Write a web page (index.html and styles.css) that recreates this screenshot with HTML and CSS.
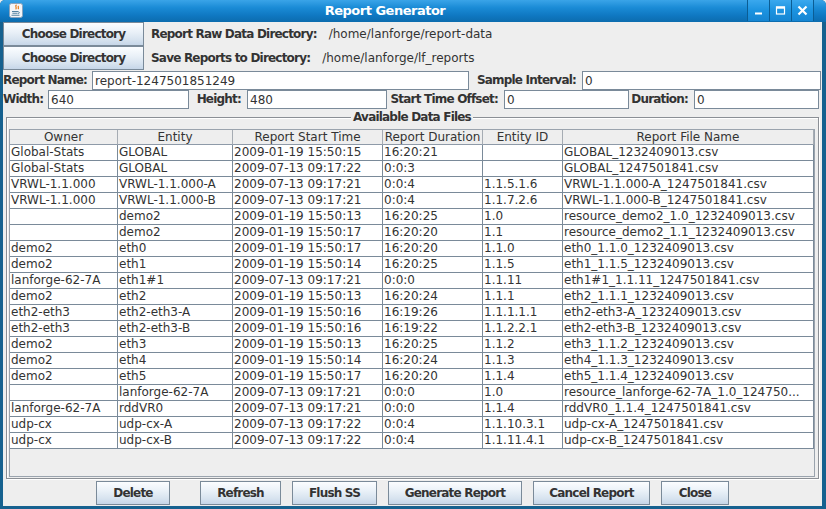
FILE: index.html
```html
<!DOCTYPE html>
<html>
<head>
<meta charset="utf-8">
<title>Report Generator</title>
<link rel="stylesheet" href="styles.css">
</head>
<body>
<div class="window">
  <div class="titlebar">
    <div class="appicon">
      <svg width="14" height="15" viewBox="0 0 14 15">
        <rect x="0.5" y="0.5" width="13" height="14" rx="2" fill="#f3f5f8" stroke="#8aa4bd"/>
        <path d="M7.5 1.8c-2.2 1.6 1 2.6-0.8 4.6M9.6 3c-1.4 1 0.8 1.8-0.6 3.2" stroke="#e76f00" stroke-width="1.1" fill="none"/>
        <path d="M3 8.5h6M3.4 10.3h5.2M2.5 12.3h8" stroke="#5382a1" stroke-width="1.1"/>
        <path d="M9 8.8c1.8-0.2 1.8 1.8 0 1.9" stroke="#5382a1" fill="none"/>
      </svg>
    </div>
    <div class="title">Report Generator</div>
    <div class="wbtns">
      <div class="wbtn"><svg width="11" height="11" viewBox="0 0 11 11"><rect x="2" y="7.5" width="7" height="2" fill="#fff"/></svg></div>
      <div class="wbtn"><svg width="11" height="11" viewBox="0 0 11 11"><rect x="1.5" y="2" width="8" height="7" fill="none" stroke="#fff" stroke-width="1.2"/><rect x="1" y="1.5" width="9" height="2.2" fill="#fff"/></svg></div>
      <div class="wbtn last"><svg width="11" height="11" viewBox="0 0 11 11"><path d="M1.5 1.5l8 8M9.5 1.5l-8 8" stroke="#fff" stroke-width="2.2"/></svg></div>
    </div>
  </div>

  <div class="content">
    <div class="dirrow">
      <button class="btn dirbtn">Choose Directory</button>
      <span class="dlbl">Report Raw Data Directory:</span>
      <span class="dval">/home/lanforge/report-data</span>
    </div>
    <div class="dirrow">
      <button class="btn dirbtn">Choose Directory</button>
      <span class="dlbl">Save Reports to Directory:</span>
      <span class="dval">/home/lanforge/lf_reports</span>
    </div>

    <div class="frow row3">
      <span class="flbl first">Report Name:</span>
      <input class="tf" type="text" value="report-1247501851249" readonly>
      <span class="flbl">Sample Interval:</span>
      <input class="tf" type="text" value="0" readonly>
    </div>
    <div class="frow row4">
      <span class="flbl first">Width:</span>
      <input class="tf" type="text" value="640" readonly>
      <span class="flbl">Height:</span>
      <input class="tf" type="text" value="480" readonly>
      <span class="flbl">Start Time Offset:</span>
      <input class="tf" type="text" value="0" readonly>
      <span class="flbl">Duration:</span>
      <input class="tf" type="text" value="0" readonly>
    </div>

    <fieldset class="files">
      <legend>Available Data Files</legend>
      <div class="scroll">
        <table class="grid">
          <colgroup>
            <col class="c-owner"><col class="c-entity"><col class="c-start"><col class="c-dur"><col class="c-id"><col class="c-file">
          </colgroup>
          <thead>
            <tr><th>Owner</th><th>Entity</th><th>Report Start Time</th><th>Report Duration</th><th>Entity ID</th><th>Report File Name</th></tr>
          </thead>
          <tbody>
            <tr><td>Global-Stats</td><td>GLOBAL</td><td>2009-01-19 15:50:15</td><td>16:20:21</td><td></td><td>GLOBAL_1232409013.csv</td></tr>
            <tr><td>Global-Stats</td><td>GLOBAL</td><td>2009-07-13 09:17:22</td><td>0:0:3</td><td></td><td>GLOBAL_1247501841.csv</td></tr>
            <tr><td>VRWL-1.1.000</td><td>VRWL-1.1.000-A</td><td>2009-07-13 09:17:21</td><td>0:0:4</td><td>1.1.5.1.6</td><td>VRWL-1.1.000-A_1247501841.csv</td></tr>
            <tr><td>VRWL-1.1.000</td><td>VRWL-1.1.000-B</td><td>2009-07-13 09:17:21</td><td>0:0:4</td><td>1.1.7.2.6</td><td>VRWL-1.1.000-B_1247501841.csv</td></tr>
            <tr><td></td><td>demo2</td><td>2009-01-19 15:50:13</td><td>16:20:25</td><td>1.0</td><td>resource_demo2_1.0_1232409013.csv</td></tr>
            <tr><td></td><td>demo2</td><td>2009-01-19 15:50:17</td><td>16:20:20</td><td>1.1</td><td>resource_demo2_1.1_1232409013.csv</td></tr>
            <tr><td>demo2</td><td>eth0</td><td>2009-01-19 15:50:17</td><td>16:20:20</td><td>1.1.0</td><td>eth0_1.1.0_1232409013.csv</td></tr>
            <tr><td>demo2</td><td>eth1</td><td>2009-01-19 15:50:14</td><td>16:20:25</td><td>1.1.5</td><td>eth1_1.1.5_1232409013.csv</td></tr>
            <tr><td>lanforge-62-7A</td><td>eth1#1</td><td>2009-07-13 09:17:21</td><td>0:0:0</td><td>1.1.11</td><td>eth1#1_1.1.11_1247501841.csv</td></tr>
            <tr><td>demo2</td><td>eth2</td><td>2009-01-19 15:50:13</td><td>16:20:24</td><td>1.1.1</td><td>eth2_1.1.1_1232409013.csv</td></tr>
            <tr><td>eth2-eth3</td><td>eth2-eth3-A</td><td>2009-01-19 15:50:16</td><td>16:19:26</td><td>1.1.1.1.1</td><td>eth2-eth3-A_1232409013.csv</td></tr>
            <tr><td>eth2-eth3</td><td>eth2-eth3-B</td><td>2009-01-19 15:50:16</td><td>16:19:22</td><td>1.1.2.2.1</td><td>eth2-eth3-B_1232409013.csv</td></tr>
            <tr><td>demo2</td><td>eth3</td><td>2009-01-19 15:50:13</td><td>16:20:25</td><td>1.1.2</td><td>eth3_1.1.2_1232409013.csv</td></tr>
            <tr><td>demo2</td><td>eth4</td><td>2009-01-19 15:50:14</td><td>16:20:24</td><td>1.1.3</td><td>eth4_1.1.3_1232409013.csv</td></tr>
            <tr><td>demo2</td><td>eth5</td><td>2009-01-19 15:50:17</td><td>16:20:20</td><td>1.1.4</td><td>eth5_1.1.4_1232409013.csv</td></tr>
            <tr><td></td><td>lanforge-62-7A</td><td>2009-07-13 09:17:21</td><td>0:0:0</td><td>1.0</td><td>resource_lanforge-62-7A_1.0_124750...</td></tr>
            <tr><td>lanforge-62-7A</td><td>rddVR0</td><td>2009-07-13 09:17:21</td><td>0:0:0</td><td>1.1.4</td><td>rddVR0_1.1.4_1247501841.csv</td></tr>
            <tr><td>udp-cx</td><td>udp-cx-A</td><td>2009-07-13 09:17:22</td><td>0:0:4</td><td>1.1.10.3.1</td><td>udp-cx-A_1247501841.csv</td></tr>
            <tr><td>udp-cx</td><td>udp-cx-B</td><td>2009-07-13 09:17:22</td><td>0:0:4</td><td>1.1.11.4.1</td><td>udp-cx-B_1247501841.csv</td></tr>
          </tbody>
        </table>
      </div>
    </fieldset>

    <div class="actions">
      <button class="btn b-delete">Delete</button>
      <button class="btn b-refresh">Refresh</button>
      <button class="btn b-flush">Flush SS</button>
      <button class="btn b-generate">Generate Report</button>
      <button class="btn b-cancel">Cancel Report</button>
      <button class="btn b-close">Close</button>
    </div>
  </div>
</div>
</body>
</html>
```

FILE: styles.css
```css
html, body {
  margin: 0;
  padding: 0;
  background: #eeeeee;
}

body {
  font-family: "DejaVu Sans", sans-serif;
  color: #333333;
}

.window {
  width: 826px;
  height: 509px;
  box-sizing: border-box;
  display: flex;
  flex-direction: column;
  background: #16618f;
  border-radius: 5px 5px 0 0;
  overflow: hidden;
}

/* ---------- title bar ---------- */
.titlebar {
  height: 22px;
  flex: none;
  display: flex;
  align-items: flex-start;
  background: linear-gradient(to bottom, #3aa4e8 0%, #1a8bd6 35%, #0f78c2 70%, #0c6cae 100%);
}

.appicon {
  width: 14px;
  height: 15px;
  margin: 3px 0 0 9px;
}

.appicon svg {
  display: block;
}

.title {
  flex: 1;
  text-align: center;
  color: #ffffff;
  font-weight: bold;
  font-size: 13px;
  letter-spacing: -0.5px;
  line-height: 21px;
}

.wbtns {
  display: flex;
  margin-right: 12px;
}

.wbtn {
  width: 21px;
  height: 21px;
  border-left: 1px solid #0b5d94;
  background: linear-gradient(to bottom, #3aa8ee 0%, #1c93e0 50%, #1585d2 100%);
  display: flex;
  align-items: center;
  justify-content: center;
}

.wbtn.last {
  border-right: 1px solid #0b5d94;
}

.wbtn svg {
  display: block;
}

/* ---------- content ---------- */
.content {
  flex: 1;
  margin: 0 4px 3px 3px;
  background: #eeeeee;
  display: flex;
  flex-direction: column;
  min-height: 0;
}

.btn {
  box-sizing: border-box;
  height: 24px;
  margin: 0;
  padding: 0;
  border: 1px solid #7a8a99;
  border-radius: 0;
  background: linear-gradient(to bottom, #fbfdff 0%, #eaf1f8 40%, #d7e3ef 75%, #c6d6e8 100%);
  font-family: "DejaVu Sans", sans-serif;
  font-weight: bold;
  font-size: 12px;
  letter-spacing: -0.8px;
  color: #333333;
  text-align: center;
}

.dirrow {
  height: 24px;
  display: flex;
  align-items: center;
}

.dirbtn {
  width: 141px;
}

.dlbl {
  margin-left: 7px;
  font-weight: bold;
  font-size: 12px;
  letter-spacing: -0.8px;
  white-space: nowrap;
}

.dval {
  margin-left: 12px;
  font-size: 12px;
  white-space: nowrap;
}

/* ---------- field rows ---------- */
.frow {
  display: grid;
  height: 19px;
  align-items: center;
}

.row3 {
  margin-top: 1px;
  grid-template-columns: 89px 377px 113px 239px;
}

.row4 {
  grid-template-columns: 45px 141px 58px 140px 117px 125px 65px 125px;
}

.flbl {
  font-weight: bold;
  font-size: 12px;
  letter-spacing: -0.8px;
  line-height: 19px;
  white-space: nowrap;
  text-align: right;
  padding-right: 6px;
}

.flbl.first {
  text-align: left;
  padding-right: 0;
}

.tf {
  box-sizing: border-box;
  width: 100%;
  height: 19px;
  margin: 0;
  padding: 0 2px;
  border: 1px solid #7a8a99;
  border-radius: 0;
  background: #ffffff;
  font-family: "DejaVu Sans", sans-serif;
  font-size: 12px;
  color: #333333;
  outline: none;
}

/* ---------- titled border ---------- */
.files {
  margin: 0 3px;
  padding: 4px 3px 1px 2px;
  border: 1px solid #8b8f95;
  box-shadow: inset 1px 1px 0 #ffffff, 1px 1px 0 #ffffff;
  min-width: 0;
}

.files legend {
  margin: 0 auto;
  padding: 0 2px;
  background: #eeeeee;
  font-weight: bold;
  font-size: 12px;
  letter-spacing: -0.8px;
  line-height: 16px;
  color: #333333;
}

.scroll {
  box-sizing: border-box;
  width: 806px;
  height: 348px;
  border: 1px solid #9aa3ad;
  background: #eeeeee;
  overflow: hidden;
}

/* ---------- table ---------- */
.grid {
  border-collapse: separate;
  border-spacing: 0;
  table-layout: fixed;
  width: 804px;
  font-family: "DejaVu Sans", sans-serif;
  font-size: 12px;
  color: #333333;
}

.c-owner { width: 108px; }
.c-entity { width: 115px; }
.c-start { width: 150px; }
.c-dur { width: 100px; }
.c-id { width: 80px; }
.c-file { width: 251px; }

.grid th {
  padding: 0;
  font-weight: normal;
  line-height: 14px;
  text-align: center;
  background: #eeeeee;
  border-right: 1px solid #a6acb3;
  border-bottom: 1px solid #8e9aa8;
  white-space: nowrap;
  overflow: hidden;
}

.grid td {
  padding: 0 0 0 1px;
  line-height: 15px;
  background: #ffffff;
  border-right: 1px solid #7a8a99;
  border-bottom: 1px solid #7a8a99;
  white-space: nowrap;
  overflow: hidden;
}

/* ---------- action buttons ---------- */
.actions {
  margin-top: 2px;
  height: 24px;
  display: flex;
  justify-content: center;
  gap: 11px;
}

.b-delete { width: 74px; }
.b-refresh { width: 81px; margin-left: 19px; }
.b-flush { width: 85px; }
.b-generate { width: 134px; }
.b-cancel { width: 117px; }
.b-close { width: 68px; }
```
